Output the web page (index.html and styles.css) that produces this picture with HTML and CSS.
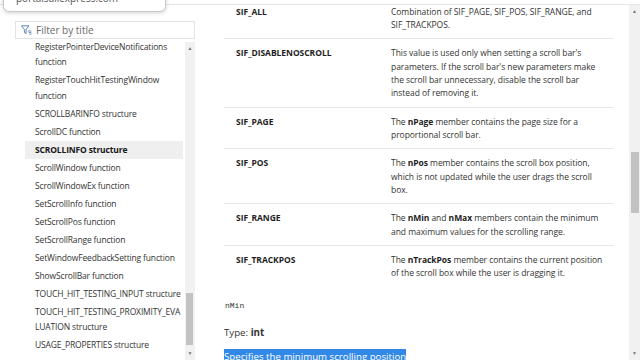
FILE: index.html
```html
<!DOCTYPE html>
<html lang="en">
<head>
  <meta charset="UTF-8">
  <title>SCROLLINFO structure</title>
  <meta name="viewport" content="width=device-width,initial-scale=1">
  <link rel="stylesheet" href="styles.css">
</head>
<body>

<div class="topbar"></div>

<!-- site popup hanging over the top -->
<div class="site-popup"><span>portalsaliexpress.com</span></div>

<div class="layout">

  <!-- TABLE OF CONTENTS -->
  <aside class="sidebar">
    <div class="filter">
      <svg class="filter-icon" width="11" height="10" viewBox="0 0 11 10">
        <path d="M0.5 0.8h7.5l-2.9 3.6v4.2l-1.7-1v-3.2z" fill="none" stroke="#5f86ad" stroke-width="1"/>
        <path d="M6.8 6h3.6M7.6 7.6h2.8M8.4 9.2h2" stroke="#5f86ad" stroke-width="0.9"/>
      </svg>
      <span>Filter by title</span>
    </div>
    <div class="toc-wrap">
      <ul class="toc">
        <li>RegisterPointerDeviceNotifications function</li>
        <li>RegisterTouchHitTestingWindow function</li>
        <li>SCROLLBARINFO structure</li>
        <li>ScrollDC function</li>
        <li class="active">SCROLLINFO structure</li>
        <li>ScrollWindow function</li>
        <li>ScrollWindowEx function</li>
        <li>SetScrollInfo function</li>
        <li>SetScrollPos function</li>
        <li>SetScrollRange function</li>
        <li>SetWindowFeedbackSetting function</li>
        <li>ShowScrollBar function</li>
        <li>TOUCH_HIT_TESTING_INPUT structure</li>
        <li>TOUCH_HIT_TESTING_PROXIMITY_EVA<br>LUATION structure</li>
        <li>USAGE_PROPERTIES structure</li>
      </ul>
      <div class="scrollbar toc-bar">
        <div class="arrow">&#9650;</div>
        <div class="track"><div class="thumb"></div></div>
        <div class="arrow">&#9660;</div>
      </div>
    </div>
  </aside>

  <!-- ARTICLE -->
  <main class="content">
    <div class="doc">
      <table class="flags">
        <tr>
          <td class="name">SIF_ALL</td>
          <td>Combination of SIF_PAGE, SIF_POS, SIF_RANGE, and SIF_TRACKPOS.</td>
        </tr>
        <tr>
          <td class="name">SIF_DISABLENOSCROLL</td>
          <td>This value is used only when setting a scroll bar's parameters. If the scroll bar's new parameters make the scroll bar unnecessary, disable the scroll bar instead of removing it.</td>
        </tr>
        <tr>
          <td class="name">SIF_PAGE</td>
          <td>The <b>nPage</b> member contains the page size for a proportional scroll bar.</td>
        </tr>
        <tr>
          <td class="name">SIF_POS</td>
          <td>The <b>nPos</b> member contains the scroll box position, which is not updated while the user drags the scroll box.</td>
        </tr>
        <tr>
          <td class="name">SIF_RANGE</td>
          <td>The <b>nMin</b> and <b>nMax</b> members contain the minimum and maximum values for the scrolling range.</td>
        </tr>
        <tr>
          <td class="name">SIF_TRACKPOS</td>
          <td>The <b>nTrackPos</b> member contains the current position of the scroll box while the user is dragging it.</td>
        </tr>
      </table>

      <p class="param"><code>nMin</code></p>
      <p class="type">Type: <strong>int</strong></p>
      <p class="param-desc"><span class="selected">Specifies the minimum scrolling position</span></p>
    </div>
  </main>

  <div class="scrollbar page-bar">
    <div class="arrow">&#9650;</div>
    <div class="track"><div class="thumb"></div></div>
    <div class="arrow">&#9660;</div>
  </div>

</div>

</body>
</html>
```

FILE: styles.css
```css
html, body { margin: 0; padding: 0; height: 360px; overflow: hidden; background: #fff; }
body { font-family: "Open Sans", "Noto Sans", Arial, sans-serif; color: #2b2b2b; font-size: 8.5px; }

.topbar { height: 4px; border-bottom: 1px solid #e6e6e6; }

.site-popup {
  position: absolute;
  top: -9px;
  left: 3px;
  width: 149px;
  height: 19px;
  padding-left: 12px;
  background: #fff;
  border: 1px solid #c9c9c9;
  border-radius: 6px;
  box-shadow: 0 1px 4px rgba(0,0,0,0.18);
  font-size: 10px;
  line-height: 13px;
  color: #555;
}

.layout { display: flex; height: 355px; }

/* sidebar */
.sidebar { width: 195px; flex: none; padding-top: 16px; display: flex; flex-direction: column; }
.filter {
  margin-left: 15px;
  width: 173px;
  height: 16px;
  border: 1px solid #e3e3e3;
  display: flex;
  align-items: center;
  gap: 4px;
  padding-left: 5px;
  font-size: 10px;
  color: #6b6b6b;
}
.filter-icon { flex: none; }
.toc-wrap { margin-top: 3px; flex: 1; display: flex; overflow: hidden; }
.toc {
  list-style: none;
  margin: -4.3px 2px 0 25px;
  padding: 0;
  width: 158px;
  font-size: 8.5px;
  letter-spacing: -0.15px;
  color: #333;
}
.toc li { padding: 1.2px 0 1.2px 10px; line-height: 15.6px; }
.toc li.active { background: #efefef; font-weight: bold; color: #171717; }

/* fake scrollbars */
.scrollbar { display: flex; flex-direction: column; background: #f1f1f1; flex: none; }
.scrollbar .arrow { height: 13px; font-size: 5px; line-height: 13px; text-align: center; color: #777; }
.scrollbar .track { flex: 1; }
.scrollbar .thumb { background: #c2c2c2; }
.toc-bar { width: 10px; }
.toc-bar .track { padding-top: 238px; }
.toc-bar .thumb { height: 52px; margin: 0 2px 0 1px; }
.page-bar { width: 11px; }
.page-bar .track { padding-top: 134px; }
.page-bar .thumb { height: 61px; margin: 0 1px 0 2px; }

/* article */
.content { flex: 1; padding: 0 15px 0 29px; overflow: hidden; }
.doc { margin-top: -7.3px; }
.flags { border-collapse: collapse; width: 390px; font-size: 8.5px; letter-spacing: -0.05px; }
.flags td { padding: 6.9px 9px 6.9px 12px; line-height: 13.4px; vertical-align: top; color: #333; }
.flags tr { border-bottom: 1px solid #e8e8e8; }
.flags tr:last-child { border-bottom: none; }
.flags td.name { width: 134px; font-weight: bold; color: #1e1e1e; }
.flags b { color: #1e1e1e; }

.param { margin: 11.5px 0 0 1px; line-height: 14px; }
.param code { font-family: "Liberation Mono", "DejaVu Sans Mono", monospace; font-size: 8px; color: #333; }
.type { margin: 12px 0 0 0; font-size: 9.7px; line-height: 16px; color: #333; }
.param-desc { margin: 8px 0 0 0; font-size: 9.7px; line-height: 15px; }
.selected { background: #3289e5; color: #fff; padding: 1px 0; }
```
